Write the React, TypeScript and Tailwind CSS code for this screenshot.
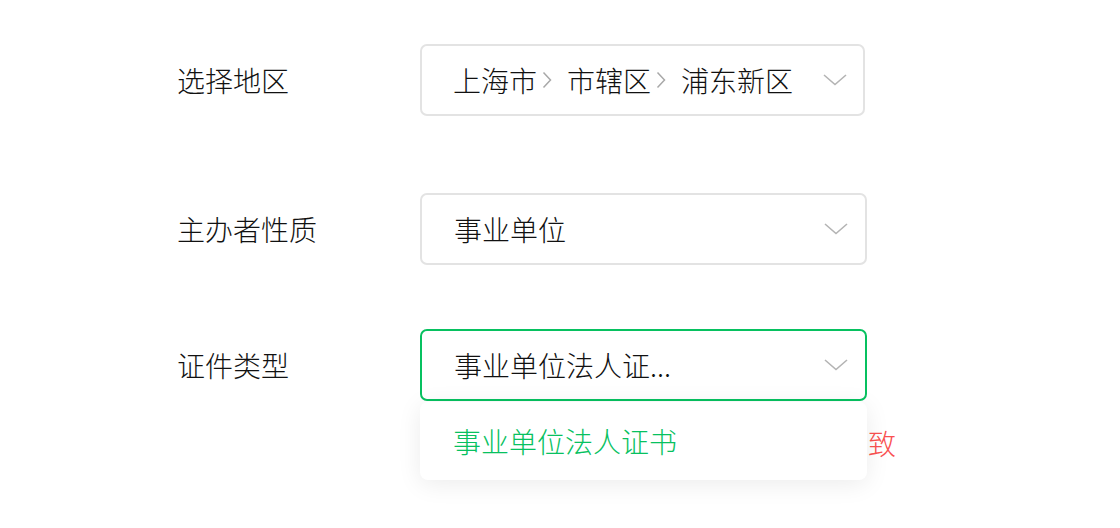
const font = { fontFamily: '"Noto Sans CJK SC", "Noto Sans", sans-serif' };

const Chevron = () => (
  <svg width="24" height="12" viewBox="0 0 24 12" fill="none" className="shrink-0">
    <polyline points="1,1 12,10.5 23,1" stroke="#b4b4b4" strokeWidth="1.6" />
  </svg>
);

const Sep = () => (
  <svg width="10" height="18" viewBox="0 0 10 18" fill="none" className="ml-[5px] mr-[15px] shrink-0">
    <polyline points="1.5,1.5 8.5,9 1.5,16.5" stroke="#a8a8a8" strokeWidth="1.5" />
  </svg>
);

const Row = ({ label, children }: { label: string; children: React.ReactNode }) => (
  <div className="flex items-center">
    <div className="w-[243px] text-[28px] font-light text-[#111]">{label}</div>
    {children}
  </div>
);

export default function App() {
  return (
    <div className="h-[528px] w-[1120px] overflow-hidden bg-white pl-[177px] pt-[44px]" style={font}>
      <Row label="选择地区">
        <div className="flex h-[72px] w-[445px] items-center justify-between rounded-[7px] border-2 border-[#e3e3e3] pl-[31px] pr-[16px]">
          <div className="flex items-center text-[28px] font-light leading-none text-[#111]">
            <span>上海市</span>
            <Sep />
            <span>市辖区</span>
            <Sep />
            <span>浦东新区</span>
          </div>
          <Chevron />
        </div>
      </Row>

      <div className="mt-[77px]">
        <Row label="主办者性质">
          <div className="flex h-[72px] w-[447px] items-center justify-between rounded-[7px] border-2 border-[#e3e3e3] pl-[32px] pr-[17px]">
            <span className="text-[28px] font-light text-[#111]">事业单位</span>
            <Chevron />
          </div>
        </Row>
      </div>

      <div className="relative mt-[64px]">
        <Row label="证件类型">
          <div className="flex h-[72px] w-[447px] items-center justify-between rounded-[7px] border-2 border-[#07c160] pl-[32px] pr-[17px]">
            <span className="text-[28px] font-light text-[#111]">事业单位法人证...</span>
            <Chevron />
          </div>
        </Row>
        {/* error hint, mostly hidden under the open dropdown */}
        <div className="ml-[243px] mt-[22px] w-[476px] text-right text-[28px] font-light leading-[40px] text-[#fa5151]">
          致
        </div>
        <div className="absolute left-[243px] top-[73px] flex h-[78px] w-[447px] items-center rounded-[8px] bg-white pl-[33px] shadow-[0_4px_24px_rgba(0,0,0,0.08)]">
          <span className="text-[28px] font-light text-[#07c160]">事业单位法人证书</span>
        </div>
      </div>
    </div>
  );
}
